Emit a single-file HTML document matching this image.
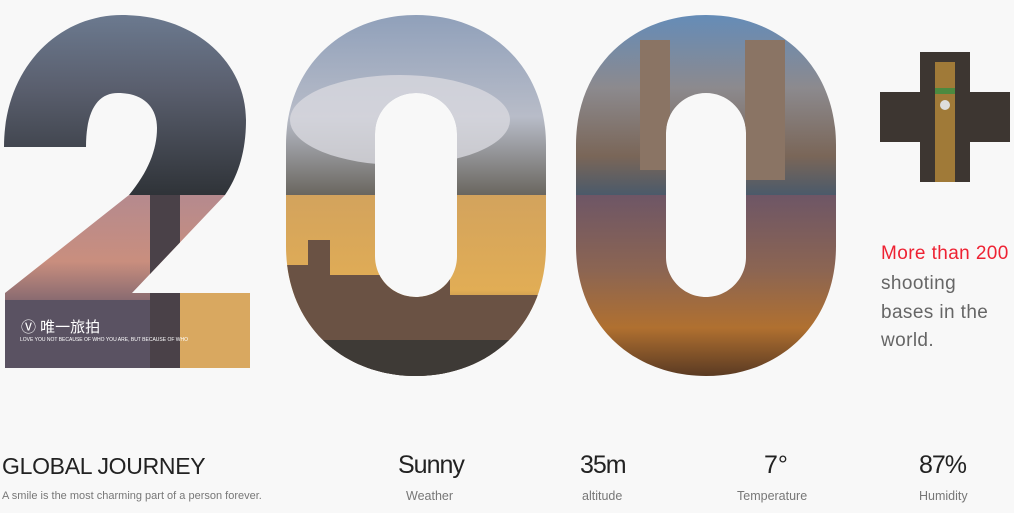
<!DOCTYPE html>
<html><head><meta charset="utf-8"><style>
html,body{margin:0;padding:0;background:#f8f8f8;width:1014px;height:513px;overflow:hidden;font-family:"Liberation Sans","Noto Sans CJK SC",sans-serif}
.t{position:absolute;color:#222;white-space:nowrap}
</style></head><body>
<svg width="1014" height="513" style="position:absolute;left:0;top:0">
<defs>
<linearGradient id="skyA" x1="0" y1="0" x2="0" y2="1"><stop offset="0" stop-color="#6f7f96"/><stop offset=".45" stop-color="#5a5f6e"/><stop offset="1" stop-color="#2f3338"/></linearGradient>
<linearGradient id="sunA" x1="0" y1="0" x2="0" y2="1"><stop offset="0" stop-color="#b58a8e"/><stop offset=".35" stop-color="#c98e7e"/><stop offset=".65" stop-color="#6b5a6a"/><stop offset="1" stop-color="#3e3b48"/></linearGradient>
<linearGradient id="skyB" x1="0" y1="0" x2="0" y2="1"><stop offset="0" stop-color="#8a9cb8"/><stop offset=".6" stop-color="#b8bcc8"/><stop offset="1" stop-color="#6a665f"/></linearGradient>
<linearGradient id="sunB" x1="0" y1="0" x2="0" y2="1"><stop offset="0" stop-color="#d3a35d"/><stop offset=".5" stop-color="#e1ad55"/><stop offset=".75" stop-color="#6a4e3a"/><stop offset="1" stop-color="#3b3a36"/></linearGradient>
<linearGradient id="skyC" x1="0" y1="0" x2="0" y2="1"><stop offset="0" stop-color="#5d8cc0"/><stop offset=".45" stop-color="#8c8a8e"/><stop offset=".8" stop-color="#7a6658"/><stop offset="1" stop-color="#4b5a6a"/></linearGradient>
<linearGradient id="sunC" x1="0" y1="0" x2="0" y2="1"><stop offset="0" stop-color="#6e5666"/><stop offset=".4" stop-color="#8c6552"/><stop offset=".7" stop-color="#b07030"/><stop offset="1" stop-color="#4a3020"/></linearGradient>
<clipPath id="c2"><path d="M4,147 C4,68 58,15 122,15 C195,15 246,62 246,120 C246,152 238,176 225,195 L132,293 L250,293 L250,368 L5,368 L5,293 L129,195 C148,172 157,150 157,128 C157,106 142,93 118,93 C98,93 86,110 86,147 Z"/></clipPath>
<clipPath id="c0a"><path fill-rule="evenodd" clip-rule="evenodd" d="M286,145 C286,65 344,15 416,15 C488,15 546,65 546,145 L546,246 C546,326 488,376 416,376 C344,376 286,326 286,246 Z M375,134 C375,111 393,93 416,93 C439,93 457,111 457,134 L457,256 C457,279 439,297 416,297 C393,297 375,279 375,256 Z"/></clipPath>
<clipPath id="c0b"><path fill-rule="evenodd" clip-rule="evenodd" d="M576,145 C576,65 634,15 706,15 C778,15 836,65 836,145 L836,246 C836,326 778,376 706,376 C634,376 576,326 576,246 Z M666,133 C666,111 684,93 706,93 C728,93 746,111 746,133 L746,257 C746,279 728,297 706,297 C684,297 666,279 666,257 Z"/></clipPath>
</defs>
<g clip-path="url(#c2)">
<rect x="0" y="0" width="260" height="195" fill="url(#skyA)"/>
<rect x="0" y="195" width="260" height="190" fill="url(#sunA)"/>
<rect x="150" y="293" width="100" height="80" fill="#d9a860"/>
<rect x="150" y="195" width="30" height="180" fill="#4a4148"/>
<rect x="0" y="300" width="150" height="70" fill="#5a5262"/>
</g>
<g clip-path="url(#c0a)">
<rect x="280" y="0" width="270" height="195" fill="url(#skyB)"/>
<rect x="280" y="195" width="270" height="190" fill="url(#sunB)"/>
<ellipse cx="400" cy="120" rx="110" ry="45" fill="#d8d8de" opacity=".8"/>
<path d="M286,376 V265 H308 V240 H330 V275 H450 V295 H546 V376 Z" fill="#6a5244"/>
<rect x="286" y="340" width="260" height="40" fill="#3e3a36"/>
</g>
<g clip-path="url(#c0b)">
<rect x="570" y="0" width="270" height="195" fill="url(#skyC)"/>
<rect x="570" y="195" width="270" height="190" fill="url(#sunC)"/>
<rect x="640" y="40" width="30" height="130" fill="#8a7464"/>
<rect x="745" y="40" width="40" height="140" fill="#8a7464"/>
</g>
<path d="M920,52 H970 V92 H1010 V142 H970 V182 H920 V142 H880 V92 H920 Z" fill="#3d3631"/>
<rect x="935" y="62" width="20" height="120" fill="#a07a38"/>
<rect x="935" y="88" width="20" height="6" fill="#4c8a40"/>
<circle cx="945" cy="105" r="5" fill="#ddd"/>
</svg>
<div class="t" style="left:21px;top:316px;color:#fff;font-size:15px">Ⓥ 唯一旅拍</div>
<div class="t" style="left:20px;top:337px;color:#fff;font-size:5px">LOVE YOU NOT BECAUSE OF WHO YOU ARE, BUT BECAUSE OF WHO</div>
<div class="t" style="left:881px;top:243px;color:#ee2233;font-size:19px;letter-spacing:0.4px">More than 200</div>
<div class="t" style="left:881px;top:270px;color:#666;font-size:19px;line-height:28.5px;letter-spacing:0.4px">shooting<br>bases in the<br>world.</div>
<div class="t" style="left:2px;top:453px;font-size:23px;letter-spacing:-0.3px">GLOBAL JOURNEY</div>
<div class="t" style="left:2px;top:490px;font-size:11px;color:#777">A smile is the most charming part of a person forever.</div>
<div class="t" style="left:398px;top:451px;font-size:25px;letter-spacing:-1px">Sunny</div>
<div class="t" style="left:406px;top:489px;font-size:12.5px;color:#777">Weather</div>
<div class="t" style="left:580px;top:451px;font-size:25px;letter-spacing:-1px">35m</div>
<div class="t" style="left:582px;top:489px;font-size:12.5px;color:#777">altitude</div>
<div class="t" style="left:764px;top:451px;font-size:25px">7°</div>
<div class="t" style="left:737px;top:489px;font-size:12.5px;color:#777">Temperature</div>
<div class="t" style="left:919px;top:451px;font-size:25px;letter-spacing:-1px">87%</div>
<div class="t" style="left:919px;top:489px;font-size:12.5px;color:#777">Humidity</div>
</body></html>
